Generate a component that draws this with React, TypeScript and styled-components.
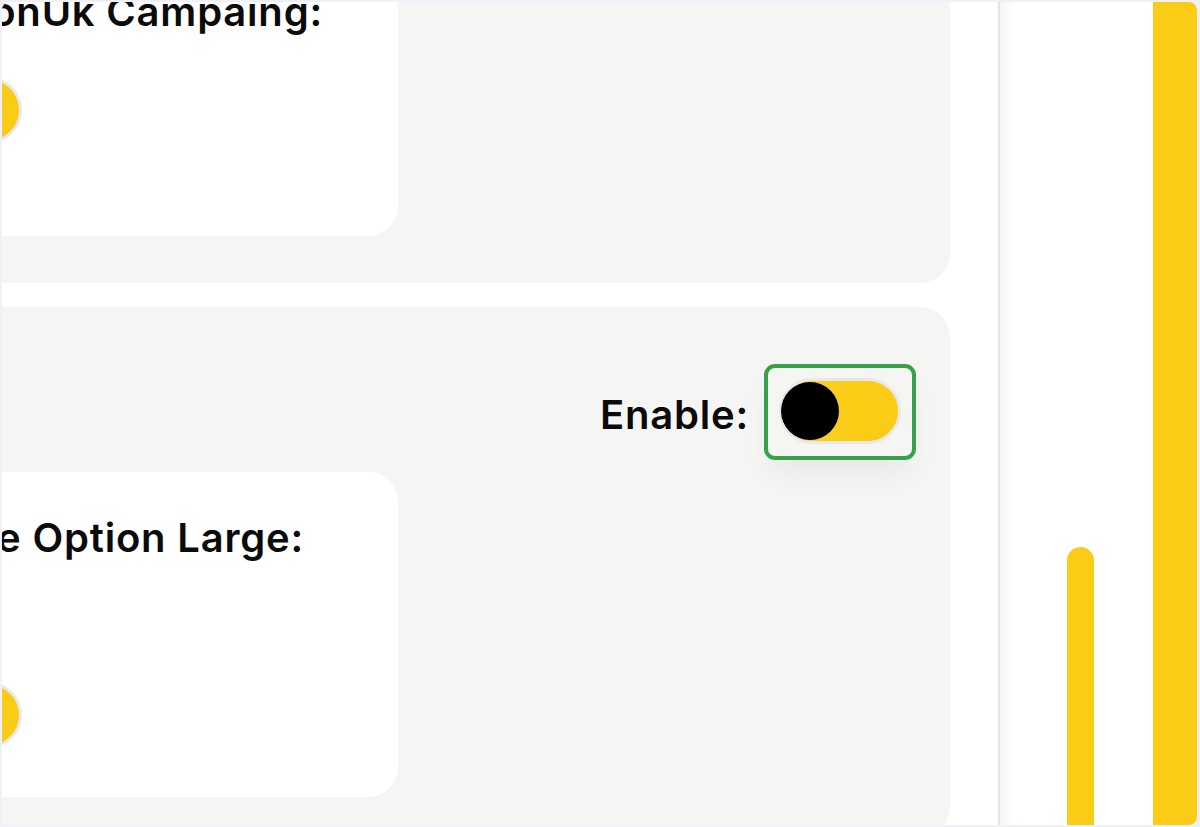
import React from "react";
import styled, { createGlobalStyle } from "styled-components";

const Global = createGlobalStyle`
  html, body { margin: 0; padding: 0; }
  body {
    background: #f1f0f7;
    font-family: Inter, "Noto Sans", "DejaVu Sans", sans-serif;
    color: #0b0b0b;
  }
  * { box-sizing: border-box; }
`;

const Frame = styled.div`
  width: 1200px;
  height: 827px;
  padding: 2px 3px 2px 2px;
  background: #f1f0f7;
`;

const Page = styled.div`
  width: 100%;
  height: 100%;
  background: #ffffff;
  border-radius: 8px;
  overflow: hidden;
  display: flex;
`;

const Main = styled.main`
  flex: 0 0 996px;
  height: 100%;
  overflow: hidden;
  padding-right: 48px;
  display: flex;
  flex-direction: column;
  gap: 24px;
`;

const Panel = styled.section<{ $top?: number; $pt: number; $pb: number }>`
  flex: 0 0 auto;
  margin-top: ${(p) => p.$top ?? 0}px;
  margin-left: -182px;
  background: #f5f5f3;
  border-radius: 30px;
  padding: ${(p) => p.$pt}px 34px ${(p) => p.$pb}px 40px;
  display: flex;
  flex-direction: column;
`;

const EnableRow = styled.div`
  display: flex;
  justify-content: flex-end;
  align-items: center;
  gap: 15px;
`;

const Label = styled.span<{ $shift?: number; $drop?: number }>`
  font-size: 40px;
  line-height: 48px;
  font-weight: 600;
  letter-spacing: 0.8px;
  margin-left: ${(p) => p.$shift ?? 0}px;
  padding-top: ${(p) => p.$drop ?? 0}px;
  white-space: nowrap;
`;

const Focus = styled.div`
  border: 4px solid #35a24b;
  border-radius: 11px;
  padding: 10px 11px 12px;
  box-shadow: 0 18px 30px -6px rgba(0, 0, 0, 0.06);
`;

const Card = styled.div<{ $gap: number; $pb: number; $mt?: number }>`
  width: 538px;
  margin-top: ${(p) => p.$mt ?? 0}px;
  background: #ffffff;
  border-radius: 30px;
  padding: 42px 40px ${(p) => p.$pb}px 40px;
  display: flex;
  flex-direction: column;
  align-items: flex-start;
  gap: ${(p) => p.$gap}px;
`;

const Toggle = styled.div`
  position: relative;
  width: 122px;
  height: 66px;
  border-radius: 33px;
  border: 3px solid #e8e8e8;
  background: linear-gradient(90deg, #f7d43a 0%, #facc15 60%, #facc15 100%);
`;

const Knob = styled.div`
  position: absolute;
  left: -1px;
  top: 1px;
  width: 58px;
  height: 58px;
  border-radius: 50%;
  background: #000000;
`;

const Sidebar = styled.aside`
  flex: 1;
  height: 100%;
  border-left: 2px solid #e4e4e4;
  box-shadow: inset 14px 0 14px -8px rgba(0, 0, 0, 0.045);
  display: flex;
  align-items: flex-end;
  padding-left: 67px;
`;

const Bar = styled.div<{ $w: number; $h: string; $round?: boolean }>`
  width: ${(p) => p.$w}px;
  height: ${(p) => p.$h};
  background: #facc15;
  border-radius: ${(p) => (p.$round ? `${p.$w / 2}px ${p.$w / 2}px 0 0` : "0")};
`;

const Spacer = styled.div`
  flex: 1;
`;

const Switch = () => (
  <Toggle>
    <Knob />
  </Toggle>
);

export default function App() {
  return (
    <>
      <Global />
      <Frame>
        <Page>
          <Main>
            <Panel $top={-96} $pt={40} $pb={47}>
              <Card $gap={41} $pb={93}>
                <Label $shift={-22}>AmazonUk Campaing:</Label>
                <Switch />
              </Card>
            </Panel>
            <Panel $pt={57} $pb={40}>
              <EnableRow>
                <Label $drop={6}>Enable:</Label>
                <Focus>
                  <Switch />
                </Focus>
              </EnableRow>
              <Card $gap={120} $pb={49} $mt={12}>
                <Label $shift={-14}>Enable Option Large:</Label>
                <Switch />
              </Card>
            </Panel>
          </Main>
          <Sidebar>
            <Bar $w={27} $h="278px" $round />
            <Spacer />
            <Bar $w={44} $h="100%" />
          </Sidebar>
        </Page>
      </Frame>
    </>
  );
}
